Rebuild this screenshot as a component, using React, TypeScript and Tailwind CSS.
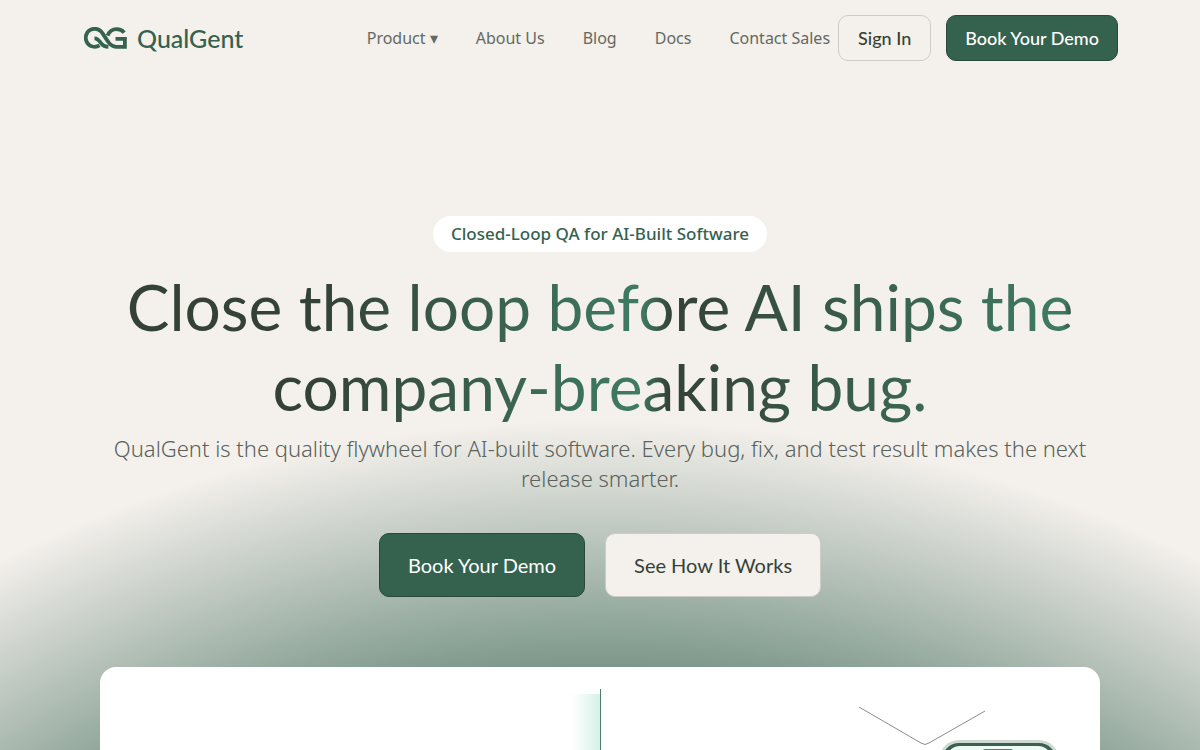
import { ReactNode } from "react";

const navLinks = ["About Us", "Blog", "Docs", "Contact Sales"];

const Logo = () => (
  <a href="#" className="flex items-center gap-[10px] text-[#34624f]">
    <svg width="43" height="22" viewBox="0 0 43 22" fill="none" aria-hidden="true">
      <g stroke="currentColor" strokeWidth="3.8">
        <path d="M15.5 18.4A9 9 0 1 1 18.6 6.4L24 14.6C26 17.8 28.6 19.8 32.4 19.8H40.9V11.9H31.5" />
        <path d="M40.2 5.6C38.4 3.4 35.9 2.1 32.6 2.1C28.6 2.1 25.2 4.6 23.6 8.6" />
        <path d="M10.5 11.4C14 11.4 15.6 14.2 17.4 16.6C19 18.8 20.8 19.8 24.4 19.8" />
      </g>
    </svg>
    <span className="text-[25px] leading-8 font-medium">QualGent</span>
  </a>
);

interface ButtonProps {
  children: ReactNode;
  className: string;
}

const Button = ({ children, className }: ButtonProps) => (
  <button
    type="button"
    className={`shrink-0 whitespace-nowrap rounded-[10px] border ${className}`}
  >
    {children}
  </button>
);

const Header = () => (
  <header className="flex h-[76px] items-center justify-between pr-[82px] pl-[84px]">
    <Logo />
    <div className="flex items-center gap-2">
      <nav className="flex items-center gap-[38px] whitespace-nowrap font-['Noto_Sans',sans-serif] text-base leading-5 text-[#626a63]">
        <button type="button">Product ▾</button>
        {navLinks.map((link) => (
          <a key={link} href="#">
            {link}
          </a>
        ))}
      </nav>
      <div className="flex items-center gap-[15px] text-lg">
        <Button className="h-[46px] border-[#cfccc8] px-[19px] font-medium text-[#344236]">
          Sign In
        </Button>
        <Button className="h-[46px] border-[#28483a] bg-[#34624f] px-[18px] font-medium text-white">
          Book Your Demo
        </Button>
      </div>
    </div>
  </header>
);

const PhoneDrawing = () => (
  <svg width="499" height="83" viewBox="0 0 499 83" fill="none" aria-hidden="true">
    <defs>
      <linearGradient id="frame" x1="0" y1="0" x2="0" y2="1">
        <stop offset="0" stopColor="#3c5f50" />
        <stop offset="1" stopColor="#3d7a64" />
      </linearGradient>
    </defs>
    <path d="M258 40l62 36q4 3 8 0l56-32" stroke="#8b8b8b" />
    <rect x="338" y="73" width="120" height="60" rx="20" fill="#cfdad5" />
    <rect x="341" y="76" width="114" height="60" rx="17" fill="url(#frame)" />
    <rect x="345" y="79" width="106" height="60" rx="14" fill="#eefaf6" />
    <rect x="382" y="82" width="30" height="6" rx="2" fill="#5c7d70" />
  </svg>
);

const App = () => {
  return (
    <div className="flex min-h-screen flex-col bg-[#f4f0ec] bg-[radial-gradient(1108px_880px_at_50%_1300px,#34624f_0%,#34624f_55%,rgba(52,98,79,0)_100%)] font-[Lato,sans-serif]">
      <Header />
      <main className="mx-auto flex w-full max-w-[1000px] flex-1 flex-col items-center pt-[140px]">
        <p className="rounded-full bg-white px-[18px] py-[6px] font-['Noto_Sans',sans-serif] text-[17px] leading-6 font-medium text-[#34624f]">
          Closed-Loop QA for AI-Built Software
        </p>
        <h1 className="mt-[15px] w-full bg-[linear-gradient(92deg,#344236_0%,#344236_22%,#3f7b63_54%,#344236_57%,#3f7b63_96%,#344236_97%)] bg-clip-text text-center text-[64px] leading-[80px] text-transparent">
          Close the loop before AI ships the company-breaking bug.
        </h1>
        <p className="mt-[6px] text-center font-['Noto_Sans',sans-serif] text-[22px] leading-[30px] font-light text-[#59625b]">
          QualGent is the quality flywheel for AI-built software. Every bug, fix, and test result makes the next release smarter.
        </p>
        <div className="mt-10 flex gap-5 text-xl">
          <Button className="h-16 border-[#28483a] bg-[#34624f] px-7 text-white">
            Book Your Demo
          </Button>
          <Button className="h-16 border-[#cfccc8] bg-[#f4f0ec] px-7 text-[#344236]">
            See How It Works
          </Button>
        </div>
        <section className="mt-[70px] grid min-h-[83px] w-full flex-1 grid-cols-2 overflow-hidden rounded-t-2xl bg-white">
          <div className="flex justify-end pt-[22px]">
            <div className="mt-[5px] w-7 bg-linear-to-r from-white to-[#d5f1e8]" />
          </div>
          <div className="flex">
            <div className="mt-[22px] w-px bg-[#4b7f6b]" />
            <PhoneDrawing />
          </div>
        </section>
      </main>
    </div>
  );
};

export default App;
